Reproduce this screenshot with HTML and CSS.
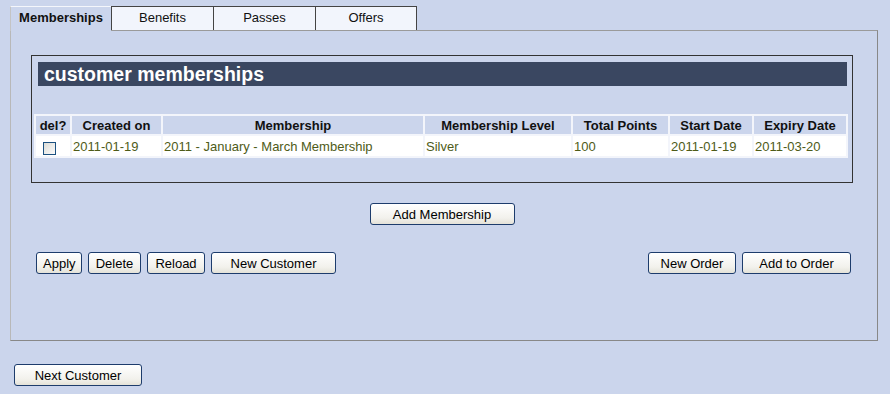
FILE: index.html
```html
<!DOCTYPE HTML>
<html>
<head>
    <meta charset="utf-8">
    <link rel="stylesheet" href="styles.css">
</head>
<body>
    <div class="page">
        <div class="tabs">
            <div class="tab tab-active">Memberships</div>
            <div class="tab">Benefits</div>
            <div class="tab">Passes</div>
            <div class="tab tab-last">Offers</div>
        </div>

        <div class="panel">
            <div class="box">
                <h2 class="box-title">customer memberships</h2>
                <table class="grid">
                    <thead>
                        <tr>
                            <th class="col-del">del?</th>
                            <th class="col-created">Created on</th>
                            <th class="col-name">Membership</th>
                            <th class="col-level">Membership Level</th>
                            <th class="col-points">Total Points</th>
                            <th class="col-start">Start Date</th>
                            <th class="col-expiry">Expiry Date</th>
                        </tr>
                    </thead>
                    <tbody>
                        <tr>
                            <td class="cell-check"><input type="checkbox" class="check"></td>
                            <td>2011-01-19</td>
                            <td>2011 - January - March Membership</td>
                            <td>Silver</td>
                            <td>100</td>
                            <td>2011-01-19</td>
                            <td>2011-03-20</td>
                        </tr>
                    </tbody>
                </table>
            </div>

            <div class="row-center">
                <button class="btn btn-add">Add Membership</button>
            </div>

            <div class="row-actions">
                <div class="btn-group">
                    <button class="btn btn-apply">Apply</button>
                    <button class="btn btn-delete">Delete</button>
                    <button class="btn btn-reload">Reload</button>
                    <button class="btn btn-customer">New Customer</button>
                </div>
                <div class="btn-group">
                    <button class="btn btn-order">New Order</button>
                    <button class="btn btn-addorder">Add to Order</button>
                </div>
            </div>
        </div>

        <button class="btn btn-next">Next Customer</button>
    </div>
</body>
</html>
```

FILE: styles.css
```css
body {
    margin: 0;
    padding: 0;
    background-color: #cbd5ec;
    font-family: "Liberation Sans", Arial, sans-serif;
    font-size: 13px;
    color: #111;
}

.page {
    padding: 6px 12px 0 10px;
}

/* tabs */
.tabs {
    display: flex;
    height: 24px;
}

.tab {
    box-sizing: border-box;
    width: 102px;
    height: 24px;
    line-height: 22px;
    text-align: center;
    background-color: #f2f5fc;
    border-left: 1px solid #444;
    border-top: 1px solid #444;
    color: #111;
}

.tab-last {
    width: 102px;
    border-right: 1px solid #444;
}

.tab-active {
    position: relative;
    z-index: 1;
    width: 101px;
    height: 25px;
    margin-bottom: -1px;
    background-color: #cbd5ec;
    border-left: 1px solid #c4c4c4;
    border-top: 1px solid #f4f6fb;
    font-weight: bold;
}

/* main panel */
.panel {
    border-top: 1px solid #9a9a9a;
    border-left: 1px solid #b8b8b8;
    border-right: 1px solid #888;
    border-bottom: 1px solid #888;
    padding: 24px 24px 66px 20px;
}

.box {
    border: 1px solid #333;
    padding: 6px 4px 24px 2px;
}

.box-title {
    margin: 0 1px 0 4px;
    height: 24px;
    line-height: 24px;
    padding-left: 6px;
    background-color: #3a4761;
    color: #fff;
    font-size: 19.5px;
    font-weight: bold;
}

.grid {
    margin-top: 28px;
    width: 814px;
    border-spacing: 2px;
    background-color: #f3f5fb;
    table-layout: fixed;
}

.grid th,
.grid td {
    box-sizing: border-box;
    padding: 0 1px;
    white-space: nowrap;
    overflow: hidden;
}

.grid th {
    height: 18px;
    background-color: #cbd5ec;
    font-weight: bold;
    text-align: center;
    color: #111;
}

.grid td {
    height: 20px;
    background-color: #fff;
    color: #4e5b18;
}

.col-del { width: 34px; }
.col-created { width: 89px; }
.col-name { width: 260px; }
.col-level { width: 146px; }
.col-points { width: 95px; }
.col-start { width: 82px; }
.col-expiry { width: 92px; }

.grid .cell-check {
    padding-left: 0;
}

.check {
    appearance: none;
    -webkit-appearance: none;
    display: block;
    box-sizing: border-box;
    width: 13px;
    height: 13px;
    margin: 5px 0 0 7px;
    border: 1px solid #1c5180;
    background: linear-gradient(135deg, #dcdcd6, #fbfbfb);
}

/* buttons */
.btn {
    box-sizing: border-box;
    height: 22px;
    padding: 0 6px;
    border: 1px solid #1d3c6c;
    border-radius: 3px;
    background: linear-gradient(#ffffff, #f2f1ec 70%, #e4e2d8);
    font-family: "Liberation Sans", Arial, sans-serif;
    font-size: 13px;
    color: #000;
}

.btn-add { width: 145px; }
.btn-apply { width: 46px; }
.btn-delete { width: 53px; }
.btn-reload { width: 58px; }
.btn-customer { width: 125px; }
.btn-order { width: 88px; }
.btn-addorder { width: 109px; }
.btn-next { width: 128px; }

.row-center {
    display: flex;
    justify-content: center;
    margin-top: 20px;
}

.row-actions {
    display: flex;
    justify-content: space-between;
    margin-top: 27px;
    padding: 0 2px 0 5px;
}

.btn-group {
    display: flex;
    gap: 6px;
}

.btn-next {
    margin: 23px 0 0 4px;
}
```
